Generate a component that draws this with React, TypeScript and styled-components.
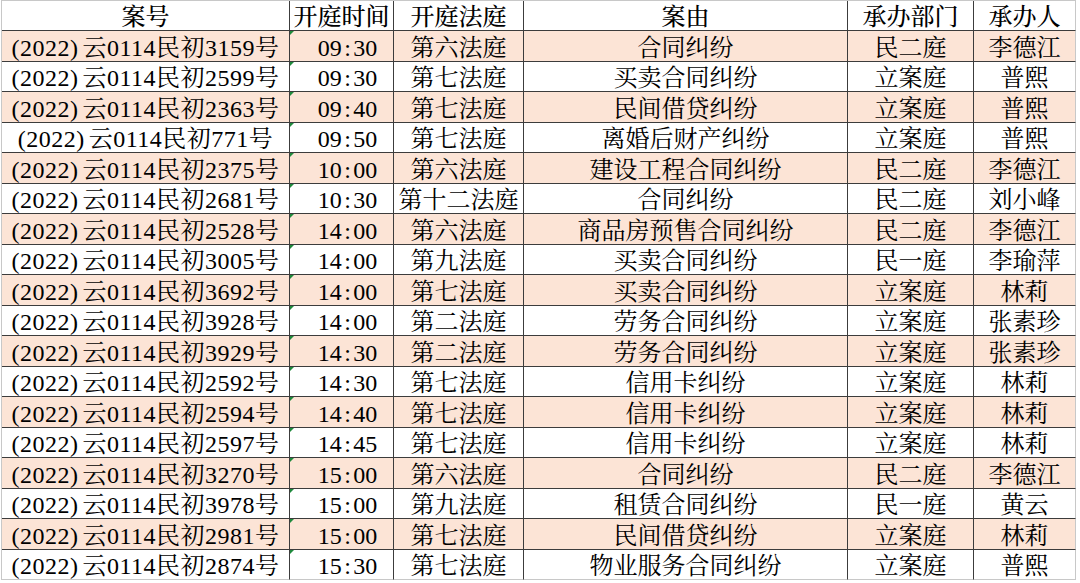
import React from "react";
import styled, { createGlobalStyle } from "styled-components";

const Global = createGlobalStyle`
  html, body { margin: 0; padding: 0; background: #ffffff; }
  body {
    font-family: "Liberation Serif", "Noto Serif CJK SC", "Source Han Serif SC", "Noto Sans CJK SC", serif;
    color: #000;
  }
`;

const Sheet = styled.div`
  display: grid;
  grid-template-columns: 288px 104px 130px 324px 126px 102px;
  grid-template-rows: 30px repeat(18, 30.5px);
  width: 1074px;
  margin: 0 0 0 1px;
  border-top: 1px solid #c8c8c8;
  border-left: 1px solid #c8c8c8;
  background: #fff;
`;

const Cell = styled.div<{ $pink?: boolean; $lastCol?: boolean; $lastRow?: boolean; $padLeft?: number; $spacing?: number }>`
  position: relative;
  box-sizing: border-box;
  display: flex;
  align-items: center;
  justify-content: center;
  padding-left: ${(p) => p.$padLeft ?? 0}px;
  padding-top: 4px;
  font-size: 24px;
  line-height: 1;
  letter-spacing: ${(p) => p.$spacing ?? 0}px;
  white-space: nowrap;
  overflow: hidden;
  background: ${(p) => (p.$pink ? "#fce4d6" : "#ffffff")};
  border-right: 1px solid ${(p) => (p.$lastCol ? "#c8c8c8" : "#3c3c3c")};
  border-bottom: 1px solid ${(p) => (p.$lastRow ? "#c8c8c8" : "#3c3c3c")};
`;

const HeadCell = styled(Cell)`
  font-weight: 500;
  font-size: 24px;
  padding-top: 2px;
`;

const Marker = styled.span`
  position: absolute;
  top: 0;
  left: 0;
  width: 0;
  height: 0;
  border-top: 4px solid #1e8a3c;
  border-right: 4px solid transparent;
`;

const Colon = styled.span`
  margin: 0 2.5px;
`;

const Gap = styled.span`
  display: inline-block;
  width: 4px;
`;

type Row = [string, string, string, string, string, string];

const rows: Row[] = [
  ["3159", "09:30", "第六法庭", "合同纠纷", "民二庭", "李德江"],
  ["2599", "09:30", "第七法庭", "买卖合同纠纷", "立案庭", "普熙"],
  ["2363", "09:40", "第七法庭", "民间借贷纠纷", "立案庭", "普熙"],
  ["771", "09:50", "第七法庭", "离婚后财产纠纷", "立案庭", "普熙"],
  ["2375", "10:00", "第六法庭", "建设工程合同纠纷", "民二庭", "李德江"],
  ["2681", "10:30", "第十二法庭", "合同纠纷", "民二庭", "刘小峰"],
  ["2528", "14:00", "第六法庭", "商品房预售合同纠纷", "民二庭", "李德江"],
  ["3005", "14:00", "第九法庭", "买卖合同纠纷", "民一庭", "李瑜萍"],
  ["3692", "14:00", "第七法庭", "买卖合同纠纷", "立案庭", "林莉"],
  ["3928", "14:00", "第二法庭", "劳务合同纠纷", "立案庭", "张素珍"],
  ["3929", "14:30", "第二法庭", "劳务合同纠纷", "立案庭", "张素珍"],
  ["2592", "14:30", "第七法庭", "信用卡纠纷", "立案庭", "林莉"],
  ["2594", "14:40", "第七法庭", "信用卡纠纷", "立案庭", "林莉"],
  ["2597", "14:45", "第七法庭", "信用卡纠纷", "立案庭", "林莉"],
  ["3270", "15:00", "第六法庭", "合同纠纷", "民二庭", "李德江"],
  ["3978", "15:00", "第九法庭", "租赁合同纠纷", "民一庭", "黄云"],
  ["2981", "15:00", "第七法庭", "民间借贷纠纷", "立案庭", "林莉"],
  ["2874", "15:30", "第七法庭", "物业服务合同纠纷", "立案庭", "普熙"],
];

const headers = ["案号", "开庭时间", "开庭法庭", "案由", "承办部门", "承办人"];

const Time: React.FC<{ value: string }> = ({ value }) => {
  const [h, m] = value.split(":");
  return (
    <>
      {h}
      <Colon>:</Colon>
      {m}
    </>
  );
};

export default function App() {
  return (
    <>
      <Global />
      <Sheet>
        {headers.map((h, i) => (
          <HeadCell key={h} $lastCol={i === 5}>
            {h}
          </HeadCell>
        ))}
        {rows.map((r, ri) => {
          const pink = ri % 2 === 0;
          const lastRow = ri === rows.length - 1;
          return (
            <React.Fragment key={ri}>
              <Cell $pink={pink} $lastRow={lastRow} $spacing={0.5}>
                (2022)<Gap />云0114民初{r[0]}号
              </Cell>
              <Cell $pink={pink} $lastRow={lastRow} $padLeft={12}>
                <Marker />
                <Time value={r[1]} />
              </Cell>
              <Cell $pink={pink} $lastRow={lastRow}>
                {r[2]}
              </Cell>
              <Cell $pink={pink} $lastRow={lastRow}>
                {r[3]}
              </Cell>
              <Cell $pink={pink} $lastRow={lastRow}>
                {r[4]}
              </Cell>
              <Cell $pink={pink} $lastRow={lastRow} $lastCol>
                {r[5]}
              </Cell>
            </React.Fragment>
          );
        })}
      </Sheet>
    </>
  );
}
